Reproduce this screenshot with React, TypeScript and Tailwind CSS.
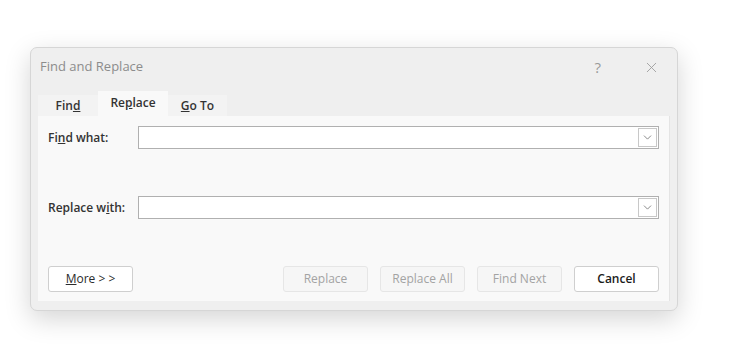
import { X, ChevronDown } from "lucide-react";

const font = { fontFamily: '"Open Sans", "Noto Sans", sans-serif' };

function Combo() {
  return (
    <div className="flex h-[23px] flex-1 border border-[#b0b0b0] bg-white">
      <div className="flex-1" />
      <div className="m-[1px] flex w-[19px] items-center justify-center border border-[#c8c8c8] bg-white">
        <ChevronDown size={13} strokeWidth={1.5} className="text-[#707070]" />
      </div>
    </div>
  );
}

function Btn({ children, disabled }: { children: React.ReactNode; disabled?: boolean }) {
  return (
    <div
      className={`flex h-[26px] w-[85px] items-center justify-center rounded-[3px] border text-[12px] ${
        disabled
          ? "border-[#e6e6e6] bg-[#f6f6f6] font-normal text-[#a3a3a3]"
          : "border-[#cfcfcf] bg-white font-semibold text-[#1b1b1b]"
      }`}
    >
      {children}
    </div>
  );
}

export default function App() {
  return (
    <div className="h-[364px] w-[736px] overflow-hidden bg-white pl-[30px] pt-[47px]" style={font}>
      <div className="flex h-[264px] w-[648px] flex-col rounded-[7px] border border-[#d6d6d6] bg-[#efefef] shadow-[0_8px_26px_rgba(0,0,0,0.17)]">
        {/* title bar */}
        <div className="flex h-[37px] items-center pl-[9px] pt-[1px]">
          <span className="flex-1 text-[13px] text-[#8c8c8c]">Find and Replace</span>
          <span className="mr-[42px] text-[15px] text-[#9a9a9a]">?</span>
          <X size={17} strokeWidth={1.2} className="mr-[17px] text-[#9a9a9a]" />
        </div>

        {/* tabs */}
        <div className="flex h-[31px] items-end pl-[7px] text-[12px] font-semibold text-[#333333]">
          <div className="flex h-[21px] w-[60px] items-center justify-center bg-[#f3f3f3] pt-[1px]">
            <span>
              Fin<u>d</u>
            </span>
          </div>
          <div className="flex h-[25px] w-[70px] items-center justify-center bg-[#f9f9f9] pb-[1px]">
            <span>
              Re<u>p</u>lace
            </span>
          </div>
          <div className="flex h-[21px] w-[59px] items-center justify-center bg-[#f3f3f3] pt-[1px]">
            <span>
              <u>G</u>o To
            </span>
          </div>
        </div>

        {/* panel */}
        <div className="mx-[7px] flex h-[185px] flex-col border-r border-[#e4e4e4] bg-[#f9f9f9] px-[10px] pt-[10px] pb-[9px] text-[12px] font-semibold text-[#333333]">
          <div className="flex items-center">
            <span className="w-[90px]">
              Fi<u>n</u>d what:
            </span>
            <Combo />
          </div>
          <div className="mt-[47px] flex items-center">
            <span className="w-[90px]">
              Replace w<u>i</u>th:
            </span>
            <Combo />
          </div>
          <div className="mt-auto flex gap-3">
            <Btn>
              <span className="font-normal text-[#2b2b2b]">
                <u>M</u>ore &gt; &gt;
              </span>
            </Btn>
            <div className="flex-1" />
            <Btn disabled>Replace</Btn>
            <Btn disabled>Replace All</Btn>
            <Btn disabled>Find Next</Btn>
            <Btn>Cancel</Btn>
          </div>
        </div>
      </div>
    </div>
  );
}
